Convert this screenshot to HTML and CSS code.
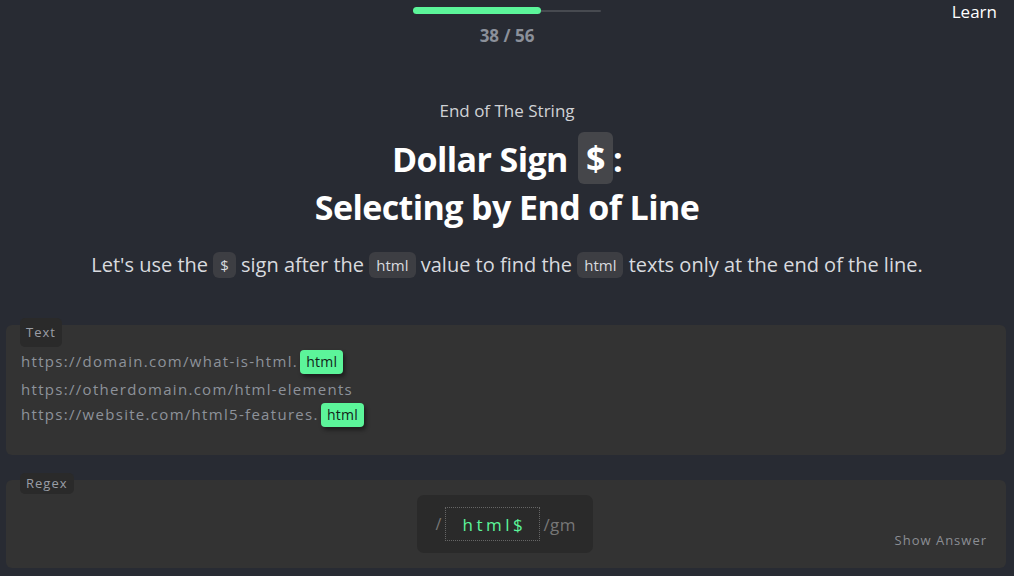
FILE: index.html
```html
<!DOCTYPE html>
<html>
<head>
<meta charset="utf-8">
<link rel="stylesheet" href="styles.css">
</head>
<body>
<header class="top">
  <div class="spacer"></div>
  <div class="progress-wrap">
    <div class="track"><div class="fill" style="width:68%"></div></div>
    <div class="count">38 / 56</div>
  </div>
  <nav class="nav"><a class="learn">Learn</a></nav>
</header>
<section class="intro">
  <div class="sub">End of The String</div>
  <h1 class="title">Dollar Sign <span class="sym">$</span>:<br>Selecting by End of Line</h1>
  <p class="desc">Let's use the <code class="chip">$</code> sign after the <code class="chip">html</code> value to find the <code class="chip">html</code> texts only at the end of the line.</p>
</section>
<section class="panel text-panel">
  <span class="label label-text">Text</span>
  <div class="line line-first">https://domain.com/what-is-html. <mark class="hit">html</mark></div>
  <div class="line">https://otherdomain.com/html-elements</div>
  <div class="line">https://website.com/html5-features. <mark class="hit">html</mark></div>
</section>
<section class="panel regex-panel">
  <span class="label label-regex">Regex</span>
  <div class="regex-box">
    <span class="slash">/</span>
    <span class="input">html$</span>
    <span class="flags">/gm</span>
  </div>
  <span class="show">Show Answer</span>
</section>
</body>
</html>
```
FILE: styles.css
```css
html, body { margin: 0; padding: 0; }
body {
  background: #282b33;
  font-family: "Open Sans", "Noto Sans", sans-serif;
  color: #fff;
  width: 1014px;
  height: 576px;
  overflow: hidden;
}
.top {
  display: grid;
  grid-template-columns: 1fr 188px 1fr;
  height: 52px;
}
.progress-wrap {
  display: flex;
  flex-direction: column;
  align-items: center;
  padding-top: 7px;
}
.track {
  width: 188px;
  height: 7px;
  position: relative;
  display: flex;
  align-items: center;
}
.track::before {
  content: "";
  position: absolute;
  left: 0; right: 0; top: 3px;
  height: 2px;
  background: #474a50;
  border-radius: 1px;
}
.fill {
  position: relative;
  height: 7px;
  background: #5cf59a;
  border-radius: 4px;
}
.count {
  margin-top: 10px;
  font-size: 17px;
  font-weight: 700;
  color: #8b909a;
  line-height: 24px;
}
.nav {
  display: flex;
  justify-content: flex-end;
  padding-right: 17px;
}
.learn {
  font-size: 17px;
  line-height: 24px;
  color: #fff;
}
.intro {
  text-align: center;
  padding-top: 47px;
}
.sub {
  font-size: 17px;
  color: #d0d2d6;
  line-height: 24px;
}
.title {
  margin: 9px 0 0;
  font-size: 34px;
  line-height: 46px;
  font-weight: 700;
  letter-spacing: -0.6px;
}
.sym {
  display: inline-block;
  background: #45464a;
  border-radius: 6px;
  padding: 0 8px;
  line-height: 52px;
  vertical-align: 1px;
  margin-left: 2px;
}
.desc {
  margin: 21px 0 0;
  font-size: 20px;
  color: #d8dadf;
  line-height: 28px;
}
.chip {
  font-family: "Open Sans", sans-serif;
  font-size: 15px;
  background: #3d3e43;
  color: #d8dadf;
  border-radius: 6px;
  padding: 3px 7px;
  vertical-align: 1px;
}
.panel {
  position: relative;
  background: #333333;
  border-radius: 6px;
  margin: 0 8px 0 6px;
}
.text-panel {
  margin-top: 46px;
  height: 130px;
  padding: 24px 15px 0;
  box-sizing: border-box;
}
.label {
  position: absolute;
  left: 14px;
  background: #2a2a2a;
  color: #9a9ea6;
  font-size: 13px;
  letter-spacing: 1px;
  padding: 0 6px;
  border-radius: 5px;
}
.label-text {
  top: -7px;
  line-height: 29px;
  height: 29px;
}
.label-regex {
  top: -7px;
  line-height: 21px;
  height: 21px;
}
.line {
  font-size: 15px;
  letter-spacing: 1.3px;
  color: #8d929a;
  line-height: 25px;
  height: 25px;
}
.line-first {
  margin-bottom: 3px;
}
.hit {
  display: inline-block;
  background: #5cf59a;
  color: #12241a;
  font-size: 14px;
  letter-spacing: 0.3px;
  border-radius: 4px;
  padding: 0 6px;
  line-height: 24px;
  box-shadow: 2px 3px 4px rgba(0,0,0,0.45);
  margin-left: -3px;
}
.regex-panel {
  margin-top: 25px;
  height: 88px;
  display: flex;
  justify-content: center;
  padding-top: 15px;
  box-sizing: border-box;
}
.regex-box {
  display: flex;
  align-items: center;
  background: #2a2a2a;
  border-radius: 7px;
  height: 58px;
  width: 176px;
  padding: 0 0 0 19px;
  box-sizing: border-box;
  margin-left: -3px;
}
.slash {
  color: #777;
  font-size: 16px;
  margin-right: 4px;
}
.input {
  border: 1px dotted #666;
  height: 34px;
  width: 95px;
  box-sizing: border-box;
  display: flex;
  align-items: center;
  justify-content: center;
  color: #5cf59a;
  font-family: "Open Sans", sans-serif;
  font-size: 17px;
  letter-spacing: 3.5px;
  padding-left: 3px;
}
.flags {
  color: #777;
  font-size: 17px;
  letter-spacing: 0.5px;
  margin-left: 3px;
}
.show {
  position: absolute;
  right: 19px;
  top: 51px;
  font-size: 13px;
  letter-spacing: 1px;
  color: #8b8e93;
}
```
